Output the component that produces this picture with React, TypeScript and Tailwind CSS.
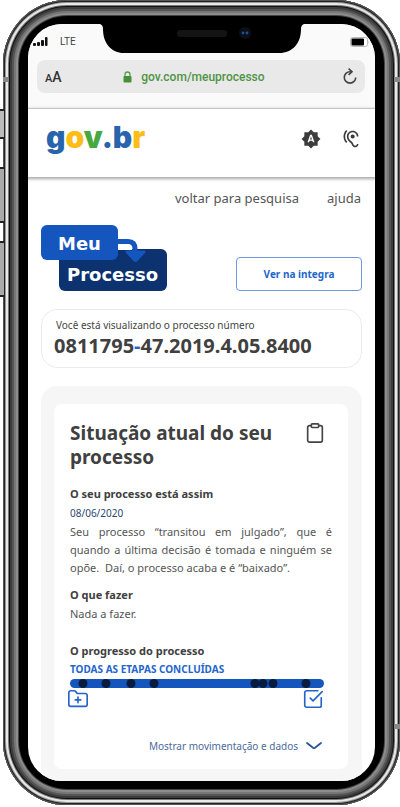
import React from "react";
import { Clipboard, FolderPlus, SquareCheckBig } from "lucide-react";
import { MdBrightnessAuto, MdHearing } from "react-icons/md";

const STEPS = [5, 14, 24, 33, 73, 76, 80, 93];

function Notch() {
  return (
    <div className="pointer-events-none absolute inset-x-0 top-0 flex justify-center" aria-hidden="true">
      <svg width="206" height="30" viewBox="-3 0 206 30">
        <path
          d="M-2 0H202Q199 1 199 5C199 19 191 29 177 29H22C9 29 1 19 1 5Q1 1 -2 0Z"
          fill="#000"
        />
        <rect x="75" y="6" width="50" height="7" rx="3" fill="#141414" />
        <circle cx="143" cy="9" r="6" fill="#0c1016" />
        <circle cx="141" cy="9" r="1.4" fill="#1f4f96" />
        <circle cx="145" cy="9" r="1.4" fill="#1f4f96" />
      </svg>
    </div>
  );
}

function StatusBar() {
  return (
    <div className="flex h-9 items-center justify-between bg-[#fafafa] pr-[5px] pl-1">
      <div className="flex items-center gap-3 pl-px">
        <svg width="15" height="10" viewBox="0 0 15 10" fill="#111" aria-hidden="true">
          <rect x="0" y="6" width="3" height="3" rx="1" />
          <rect x="4" y="5" width="3" height="4" rx="1" />
          <rect x="8" y="3" width="3" height="6" rx="1" />
          <rect x="12" y="0" width="2.5" height="9" rx="1" />
        </svg>
        <span className="font-['Roboto',sans-serif] text-[10px] leading-4 text-[#444]">LTE</span>
      </div>
      <svg width="20" height="10" viewBox="0 0 20 10" aria-hidden="true">
        <rect x="0.5" y="0.5" width="17" height="9" rx="2" fill="#fff" stroke="#bbb" />
        <rect x="1.500" y="1.500" width="12.500" height="7" rx="1" fill="#000" />
        <path d="M18.5 3.5Q20 5 18.5 6.5Z" fill="#bbb" />
      </svg>
    </div>
  );
}

function AddressBar() {
  return (
    <div className="border-b border-[#e4e4e4] bg-[#fafafa] pr-[10px] pb-[15px] pl-[9px]">
      <div className="flex h-[33px] items-center justify-between rounded-lg bg-[#e9e9e9] px-2 font-['Roboto',sans-serif]">
        <button type="button" aria-label="Tamanho do texto" className="text-[#333]">
          <span className="text-[11px] font-medium">A</span>
          <span className="text-[14px] font-medium">A</span>
        </button>
        <div className="flex items-center gap-[9px]">
          <svg width="9" height="12" viewBox="0 0 9 12" aria-hidden="true">
            <path d="M2 5V3.5a2.5 2.5 0 0 1 5 0V5" fill="none" stroke="#5b9c52" strokeWidth="1.3" />
            <rect x="0.5" y="5" width="8" height="6.5" rx="1" fill="#469137" />
          </svg>
          <input
            type="text"
            aria-label="Endereço"
            defaultValue="gov.com/meuprocesso"
            className="w-[140px] bg-transparent text-[12px] font-medium text-[#4f9445] outline-none"
          />
        </div>
        <button type="button" aria-label="Recarregar" className="text-[#444]">
          <svg width="14" height="17" viewBox="0 0 14 17" fill="none" stroke="currentColor" strokeWidth="1.6">
            <path d="M8.500 3.700H7A5.700 5.700 0 1 0 12.700 9.400" />
            <path d="M5.600 0.600L9 3.700L5.600 6.800" />
          </svg>
        </button>
      </div>
    </div>
  );
}

function SiteHeader() {
  return (
    <header className="relative flex h-[68px] items-center justify-between bg-white pr-[14px] pl-[18px] shadow-[0_1px_3px_1px_rgba(0,0,0,0.35)]">
      <a href="#inicio" className="pb-3 font-['Inter',sans-serif] text-[30px] leading-10 font-black text-[#2864ae]">
        g<span className="text-[#fdbd16]">o</span>
        <span className="text-[#47a93f]">v</span>.b<span className="text-[#fdbd16]">r</span>
      </a>
      <div className="flex items-center gap-5 pb-2 text-[#3c3c3c]">
        <button type="button" aria-label="Contraste">
          <MdBrightnessAuto size={20} />
        </button>
        <button type="button" aria-label="Acessibilidade auditiva">
          <MdHearing size={20} />
        </button>
      </div>
    </header>
  );
}

function ProductLogo() {
  return (
    <svg width="126" height="66" viewBox="0 0 126 66" role="img" aria-label="Meu Processo">
      <rect x="18" y="24" width="108" height="42" rx="6" fill="#0c326f" />
      <path d="M74 19H91V25H74Z" fill="#fff" />
      <path d="M74 16.500H87Q94 16.500 94 24V30" fill="none" stroke="#1555be" strokeWidth="5" />
      <path d="M85 28Q83.500 25.500 86 25.500H103Q105.500 25.500 104 28L96.500 36Q94.500 38 92.500 36Z" fill="#1555be" />
      <rect x="0" y="0" width="77" height="35" rx="6" fill="#1555be" />
      <g fill="#fff" fontFamily="'DejaVu Sans', sans-serif" fontWeight="700" fontSize="18">
        <text x="17" y="25">Meu</text>
        <text x="26" y="56">Processo</text>
      </g>
    </svg>
  );
}

function Progress() {
  return (
    <div>
      <div
        role="progressbar"
        aria-label="Progresso do processo"
        aria-valuenow={100}
        className="relative mt-[2px] h-[9px] w-full rounded-full bg-[#1555be]"
      >
        {STEPS.map((left) => (
          <span
            key={left}
            className="absolute top-0 size-[9px] -translate-x-1/2 rounded-full bg-[#0a1c3e]"
            style={{ left: `${left}%` }}
          />
        ))}
      </div>
      <div className="-ml-[3px] flex justify-between text-[#2465cc]">
        <FolderPlus size={22} strokeWidth={1.8} />
        <SquareCheckBig size={22} strokeWidth={1.8} />
      </div>
    </div>
  );
}

function StatusCard() {
  return (
    <section className="rounded-t-2xl bg-[#f6f6f6] pt-[18px] pr-[14px] pb-3 pl-[13px]">
      <div className="rounded-lg bg-white px-4 pt-[17px] pb-[13px] text-[11px] text-[#555]">
        <div className="flex items-start justify-between pr-[6px]">
          <h1 className="text-[19px] leading-6 font-bold text-[#404040]">
            Situação atual do seu
            <br />
            processo
          </h1>
          <Clipboard size={22} strokeWidth={1.8} className="mt-px text-[#444]" />
        </div>
        <h2 className="mt-[15px] leading-5 font-bold text-[#404040]">O seu processo está assim</h2>
        <time dateTime="2020-06-08" className="block text-[10px] leading-[18px] text-[#2c4670]">
          08/06/2020
        </time>
        <p className="mt-px text-justify leading-[18px]">
          Seu processo “transitou em julgado”, que é quando a última decisão é tomada e ninguém se opõe.&nbsp; Daí, o
          processo acaba e é “baixado”.
        </p>
        <h2 className="mt-2 leading-5 font-bold text-[#404040]">O que fazer</h2>
        <p className="leading-[18px]">Nada a fazer.</p>
        <h2 className="mt-[18px] leading-5 font-bold text-[#404040]">O progresso do processo</h2>
        <div className="mr-2">
          <p className="text-[10px] leading-4 font-bold text-[#2465cc]">TODAS AS ETAPAS CONCLUÍDAS</p>
          <Progress />
        </div>
        <button
          type="button"
          className="mt-[26px] mr-[10px] ml-auto flex items-center gap-2 text-[10px] leading-5 text-[#4c6a9c]"
        >
          Mostrar movimentação e dados
          <svg width="16" height="8" viewBox="0 0 16 8" fill="none" stroke="#2c5596" strokeWidth="1.8" aria-hidden="true">
            <path d="M1 1L7 5.800Q8 6.500 9 5.800L15 1" strokeLinecap="round" />
          </svg>
        </button>
      </div>
    </section>
  );
}

function FrameDetails() {
  return (
    <div aria-hidden="true">
      <span className="absolute top-[109px] left-0 h-[30px] w-1 border-y-2 border-[#222] bg-[#bbb]" />
      <span className="absolute top-[167px] left-0 h-14 w-1 border-y-2 border-[#222] bg-[#aaa]" />
      <span className="absolute top-[241px] left-0 h-14 w-1 border-y-2 border-[#222] bg-[#aaa]" />
      <span className="absolute top-[77px] left-[3px] h-[5px] w-[6px] bg-[#888]" />
      <span className="absolute top-[77px] right-0 h-[5px] w-[6px] bg-[#888]" />
      <span className="absolute right-0 bottom-[78px] h-[5px] w-[6px] bg-[#888]" />
    </div>
  );
}

export default function App() {
  return (
    <div className="relative w-full bg-white pb-[2px] pl-[3px] font-['Noto_Sans',sans-serif]">
      <div className="rounded-[64px] bg-black px-[25px] py-6 shadow-[inset_0_0_0_1px_#555,inset_0_0_0_2px_#222,inset_0_0_0_3px_#999,inset_0_0_0_5px_#e8e8e8,inset_0_0_0_6px_#777,inset_0_0_0_7px_#111,inset_0_0_0_9px_#3c3c3c,inset_0_0_0_11px_#555,inset_0_0_0_13px_#777,inset_0_0_0_15px_#8c8c8c,inset_0_0_0_16px_#444]">
        <div className="relative flex flex-col overflow-hidden rounded-[34px] bg-white">
          <StatusBar />
          <AddressBar />
          <SiteHeader />
          <main className="flex flex-col px-[13px]">
            <nav className="mt-[11px] flex justify-end gap-7 pr-px text-[13px] leading-5 text-[#555]">
              <a href="#pesquisa">voltar para pesquisa</a>
              <a href="#ajuda">ajuda</a>
            </nav>
            <div className="mt-[17px] flex items-end justify-between">
              <ProductLogo />
              <button
                type="button"
                className="h-[34px] w-[126px] rounded border border-[#6f98e0] text-[10px] font-bold text-[#2465cc]"
              >
                Ver na integra
              </button>
            </div>
            <div className="mt-[18px] rounded-2xl border border-[#ececec] px-3 pt-[7px] pb-2">
              <p className="pl-[2px] text-[10px] leading-4 text-[#444]">Você está visualizando o processo número</p>
              <p className="text-[20px] leading-[26px] font-bold text-[#404040]">
                0811795<span className="text-[#2465cc]">-</span>47.2019.4.05.8400
              </p>
            </div>
            <div className="mt-[18px]">
              <StatusCard />
            </div>
          </main>
          <Notch />
        </div>
      </div>
      <FrameDetails />
    </div>
  );
}
